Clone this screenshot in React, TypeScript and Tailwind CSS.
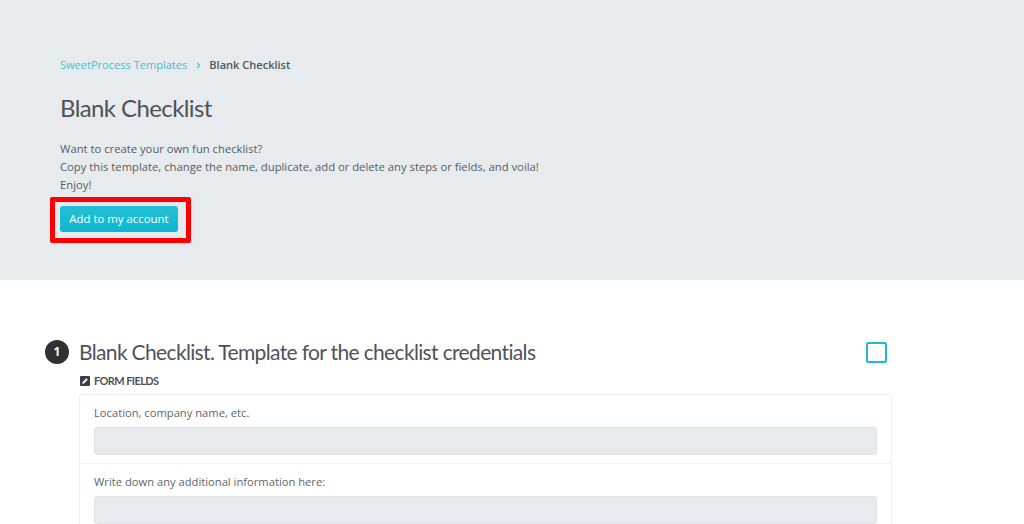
import React from 'react';
import { ChevronRight } from 'lucide-react';

const fields = ['Location, company name, etc.', 'Write down any additional information here:'];

export default function App() {
  return (
    <div className="h-[524px] w-[1024px] overflow-hidden bg-white font-['Open_Sans',sans-serif] text-[#555b62]">
      <header className="h-[280px] bg-[#e8ebee] pl-[60px] pt-[56px]">
        <nav className="flex h-[18px] items-center text-[11.05px] leading-[18px]">
          <a className="text-[#45bfd3]">SweetProcess Templates</a>
          <ChevronRight className="ml-[7px] mr-[6px] h-[9px] w-[9px] text-[#45bfd3]" strokeWidth={3} />
          <span className="font-semibold text-[#50565c]">Blank Checklist</span>
        </nav>
        <h1 className="mt-[19px] font-['Lato',sans-serif] text-[24px] font-normal leading-[30px] tracking-[-0.6px] text-[#4d535a]">
          Blank Checklist
        </h1>
        <div className="mt-[17px] text-[11.25px] leading-[18px]">
          <p>Want to create your own fun checklist?</p>
          <p>Copy this template, change the name, duplicate, add or delete any steps or fields, and voila!</p>
          <p>Enjoy!</p>
        </div>
        <div className="-ml-[10px] mt-[3px] inline-block rounded-[2px] border-[5px] border-[#fe0000] pb-[6px] pl-[5px] pr-[8px] pt-[4px]">
          <button className="block h-[26px] w-[118px] rounded-[3px] bg-gradient-to-b from-[#25c0d5] to-[#08b7cf] text-center text-[11.4px] font-medium text-white">
            Add to my account
          </button>
        </div>
      </header>

      <section className="pl-[45px] pr-[132px] pt-[60px]">
        <div className="flex h-[24px] items-center">
          <span className="flex h-[24px] w-[24px] items-center justify-center rounded-full bg-[#2f3233] text-[12px] font-bold text-white">
            1
          </span>
          <h2 className="ml-[10px] font-['Lato',sans-serif] text-[21px] font-normal leading-[24px] tracking-[-0.65px] text-[#4d535a]">
            Blank Checklist. Template for the checklist credentials
          </h2>
          <span className="ml-auto mr-[5px] h-[21px] w-[21px] rounded-[2px] border-[2px] border-[#1fb9d1]" />
        </div>

        <div className="ml-[35px] mt-[8px] flex h-[18px] items-center gap-[4px] font-['Lato',sans-serif] text-[11px] font-bold tracking-[-0.6px] text-[#4d535a]">
          <svg viewBox="0 0 10 10" className="h-[10px] w-[10px]">
            <rect width="10" height="10" rx="1" fill="#3c4044" />
            <path d="M2.2 7.8 L2.6 6 L6.4 2.2 L7.8 3.6 L4 7.4 Z" fill="#fff" />
          </svg>
          FORM FIELDS
        </div>

        <div className="ml-[34px] mt-[4px] rounded-t-[3px] border border-b-0 border-[#eff0f2]">
          {fields.map((label, i) => (
            <div key={label} className={`px-[14px] pb-[8px] pt-[9px] ${i === 0 ? 'border-b border-[#eff0f2]' : ''}`}>
              <label className="block text-[11.2px] leading-[18px] text-[#60666c]">{label}</label>
              <div className="mt-[5px] h-[28px] rounded-[3px] border border-[#dfe2e6] bg-[#e8ebee]" />
            </div>
          ))}
        </div>
      </section>
    </div>
  );
}
